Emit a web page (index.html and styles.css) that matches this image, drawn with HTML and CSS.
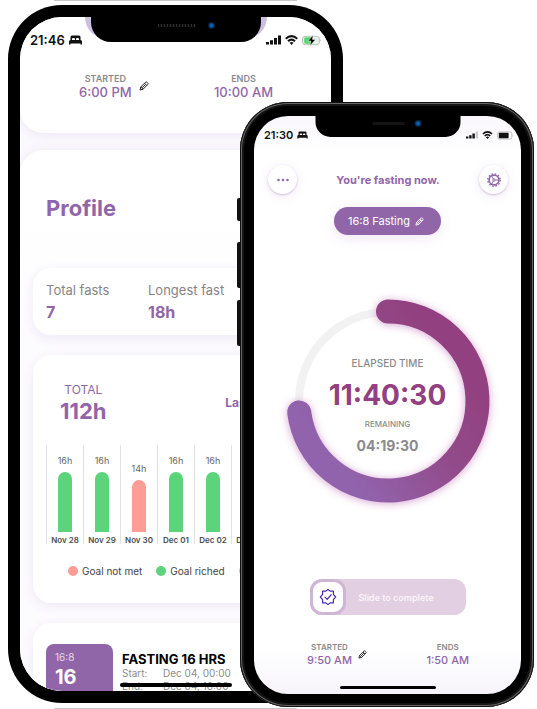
FILE: index.html
```html
<!DOCTYPE html>
<html lang="en">
<head>
<meta charset="utf-8">
<meta name="viewport" content="width=device-width, initial-scale=1">
<title>Fasting tracker</title>
<link rel="stylesheet" href="styles.css">
</head>
<body>
<svg class="defs" width="0" height="0" aria-hidden="true">
  <symbol id="bed" viewBox="0 0 26 20"><path d="M3 10V4q0-3 3-3h14q3 0 3 3v6h-3V8q0-2-2-2h-2q-2 0-2 2v2h-2V8q0-2-2-2H8Q6 6 6 8v2zM3 10h20q3 0 3 3v6h-3v-2H3v2H0v-6q0-3 3-3z"/></symbol>
  <symbol id="pencil" viewBox="0 0 20 20"><g fill="none" stroke="currentColor" stroke-width="2" stroke-linejoin="round"><path d="M2 18l1.500-6L13 2.500q1.500-1.500 3 0l1.500 1.500q1.500 1.500 0 3L8 16.500z"/><path d="M11 4.500l4.500 4.500M3.500 12L8 16.500M6.500 13.500l7-7"/></g></symbol>
  <symbol id="signal" viewBox="0 0 30 20"><path d="M0 14h6v5H0zM8 10.500h6V19H8zM16 6h6v13h-6z"/><path class="last-bar" d="M24 1h6v18h-6z"/></symbol>
  <symbol id="wifi" viewBox="0 0 26 20"><g fill="none" stroke="currentColor" stroke-width="4"><path d="M1.500 7.500q11.500-10.500 23 0"/><path d="M6 12.500q7-6.500 14 0"/></g><path d="M9 15.500q4-3 8 0L13 20z"/></symbol>
</svg>
<main class="stage">
  <section class="phone phone-back" aria-label="Profile">
    <div class="screen">
      <div class="notch"><span class="speaker"></span><span class="lens"></span></div>
      <header class="status">
        <span class="clock">21:46 <svg class="i-bed"><use href="#bed"/></svg></span>
        <span class="indicators">
          <svg class="i-signal"><use href="#signal"/></svg>
          <svg class="i-wifi"><use href="#wifi"/></svg>
          <svg class="i-battery" viewBox="0 0 38 20"><rect x="1" y="2" width="32" height="16" rx="5" fill="#e9f3eb" stroke="#a9b5aa" stroke-width="1.500"/><path d="M7 4h12v12H7q-3 0-3-3V7q0-3 3-3z" fill="#5bd573"/><path d="M35 7q3 3 0 6z" fill="#aaa"/><path d="M21 0L11 11h6l-2 9L26 8h-6z" fill="#000" stroke="#fff"/></svg>
        </span>
      </header>
      <div class="times">
        <div class="time"><small>STARTED</small><strong>6:00 PM</strong></div>
        <button class="edit" aria-label="Edit start time"><svg><use href="#pencil"/></svg></button>
        <div class="time time-end"><small>ENDS</small><strong>10:00 AM</strong></div>
      </div>
      <div class="panel">
        <h1>Profile</h1>
        <div class="card stats">
          <div class="stat"><span>Total fasts</span><b>7</b></div>
          <div class="stat"><span>Longest fast</span><b>18h</b></div>
        </div>
        <div class="card summary">
          <div class="summary-head">
            <div class="total"><span>TOTAL</span><b>112h</b></div>
            <button class="range">Last 7 days</button>
          </div>
          <div class="chart">
            <div class="day"><span>16h</span><i class="bar"></i><b>Nov 28</b></div>
            <div class="day"><span>16h</span><i class="bar"></i><b>Nov 29</b></div>
            <div class="day"><span>14h</span><i class="bar missed"></i><b>Nov 30</b></div>
            <div class="day"><span>16h</span><i class="bar"></i><b>Dec 01</b></div>
            <div class="day"><span>16h</span><i class="bar"></i><b>Dec 02</b></div>
            <div class="day"><span>16h</span><i class="bar"></i><b>Dec 03</b></div>
            <div class="day"><span>16h</span><i class="bar"></i><b>Dec 04</b></div>
          </div>
          <div class="legend">
            <span class="key key-missed">Goal not met</span>
            <span class="key">Goal riched</span>
            <span class="key key-open">Active</span>
          </div>
        </div>
        <div class="card entry">
          <div class="tile"><span>16:8</span><b>16</b></div>
          <div class="entry-text">
            <h2>FASTING 16 HRS</h2>
            <dl><dt>Start:</dt><dd>Dec 04, 00:00</dd><dt>End:</dt><dd>Dec 04, 16:00</dd></dl>
          </div>
        </div>
      </div>
      <div class="home"></div>
    </div>
  </section>

  <section class="phone phone-front" aria-label="Current fast">
    <div class="keys"><i></i><i></i><i></i></div>
    <div class="screen">
      <div class="notch"><span class="speaker"></span><span class="lens"></span></div>
      <header class="status">
        <span class="clock">21:30 <svg class="i-bed"><use href="#bed"/></svg></span>
        <span class="indicators">
          <svg class="i-signal weak"><use href="#signal"/></svg>
          <svg class="i-wifi"><use href="#wifi"/></svg>
          <svg class="i-battery" viewBox="0 0 38 20"><rect x="1" y="2" width="32" height="16" rx="4" fill="#fff" stroke="#aaa" stroke-width="1.500"/><rect x="4" y="4" width="22" height="12" rx="1.500"/><path d="M35 7q3 3 0 6z" fill="#aaa"/></svg>
        </span>
      </header>
      <div class="topbar">
        <button class="round" aria-label="More"><svg viewBox="0 0 14 14"><circle cx="2.500" cy="7" r="1.300"/><circle cx="7" cy="7" r="1.300"/><circle cx="11.500" cy="7" r="1.300"/></svg></button>
        <h2>You're fasting now.</h2>
        <button class="round" aria-label="Settings"><svg viewBox="0 0 14 14"><g fill="none" stroke="currentColor"><circle cx="7" cy="7" r="6.200" stroke-width="1.400" stroke-dasharray="1.620 1.620"/><circle cx="7" cy="7" r="4.900" stroke-width="1.600"/><path d="M8.300 7H12M6.400 5.900L4.600 2.800M6.400 8.100l-1.800 3.100"/><circle cx="7" cy="7" r="1.200"/></g></svg></button>
      </div>
      <button class="plan">16:8 Fasting <svg><use href="#pencil"/></svg></button>
      <div class="dial">
        <svg class="ring" viewBox="0 0 224 224" aria-hidden="true">
          <defs><linearGradient id="sweep" x1="0.850" y1="0.200" x2="0.150" y2="0.750"><stop offset="0" stop-color="#92407f"/><stop offset="0.450" stop-color="#924b8a"/><stop offset="1" stop-color="#9163ac"/></linearGradient></defs>
          <circle cx="112" cy="112" r="89" fill="none" stroke="#f2f2f2" stroke-width="8"/>
          <path class="arc" d="M112 22.500A89.500 89.500 0 1 1 23.200 123.400" fill="none" stroke="url(#sweep)" stroke-width="24" stroke-linecap="round"/>
        </svg>
        <div class="readout">
          <span class="label">ELAPSED TIME</span>
          <strong>11:40:30</strong>
          <span class="label small">REMAINING</span>
          <b>04:19:30</b>
        </div>
      </div>
      <div class="slide">
        <input id="complete" type="range" min="0" max="100" value="0">
        <svg viewBox="0 0 20 20" aria-hidden="true"><g fill="none" stroke="#4a2bb0" stroke-width="1.300" stroke-linejoin="round" stroke-linecap="round"><path d="M10 1.500l2.300 2H16v3.700l2.500 2.800-2.500 2.800v3.700h-3.700l-2.300 2-2.300-2H4v-3.700L1.500 10 4 7.200V3.500h3.700z"/><path d="M6.700 10.200l2.400 2.500 4.400-5.200"/></g></svg>
        <label for="complete">Slide to complete</label>
      </div>
      <div class="times">
        <div class="time"><small>STARTED</small><strong>9:50 AM</strong></div>
        <button class="edit" aria-label="Edit start time"><svg><use href="#pencil"/></svg></button>
        <div class="time time-end"><small>ENDS</small><strong>1:50 AM</strong></div>
      </div>
      <div class="home"></div>
    </div>
  </section>
</main>
</body>
</html>
```
FILE: styles.css
```css
* { box-sizing: border-box; }
body {
  margin: 0;
  background: #fff;
  font-family: Inter, "Liberation Sans", sans-serif;
  color: #111;
}
button { border: 0; padding: 0; background: none; font: inherit; color: inherit; cursor: pointer; }
svg { display: block; fill: currentColor; }
h1, h2, dl, dd { margin: 0; }
.defs { position: absolute; }

.stage {
  display: grid;
  grid-template-columns: 232fr 103fr 191fr;
  align-items: start;
  padding: 5px 3px 2px 8px;
  overflow: hidden;
}
.phone { position: relative; grid-row: 1; background: #000; }
.phone-back {
  grid-column: 1 / 3;
  aspect-ratio: 335 / 698;
  padding: 12px;
  border-radius: 54px;
}
.phone-back::before,
.phone-back::after {
  content: "";
  position: absolute;
  left: 46px;
  right: 46px;
  height: 1px;
  background: #c8c8c8;
}
.phone-back::before { top: -5px; }
.phone-back::after { bottom: -6px; }
.phone-front {
  grid-column: 2 / 4;
  aspect-ratio: 294 / 605;
  margin-top: 97px;
  padding: 14px 13px 13px 14px;
  border-radius: 48px;
  box-shadow: inset 0 0 0 1px #111, inset 0 0 0 2px #666, inset 0 0 0 4px #151515;
}
.screen {
  position: relative;
  display: flex;
  flex-direction: column;
  height: 100%;
  overflow: hidden;
  background: #fff;
}
.phone-back .screen { border-radius: 42px; background: #faf9fd; }
.phone-front .screen {
  border-radius: 34px;
  background: linear-gradient(#faf7fc, #fff 40px, #fff 530px, #f6f4fa);
}

.keys { position: absolute; top: 96px; left: -3px; display: grid; gap: 12px; }
.keys i { width: 4px; height: 46px; background: #111; border-radius: 2px 0 0 2px; }
.keys i:first-child { height: 23px; margin-bottom: 9px; }

.notch {
  position: absolute;
  z-index: 2;
  top: 0;
  left: 50%;
  display: flex;
  align-items: center;
  justify-content: center;
  transform: translateX(-50%);
  background: #000;
}
.phone-back .notch {
  width: 170px;
  height: 25px;
  padding-bottom: 8px;
  gap: 12px;
  border-radius: 0 0 20px 20px;
  background: none;
}
.phone-back .notch::before {
  content: "";
  position: absolute;
  z-index: -1;
  inset: 0 -6px 3px;
  border-radius: 0 0 22px 22px;
  background: #cdbfe0;
}
.phone-back .notch::after {
  content: "";
  position: absolute;
  z-index: -1;
  inset: 0;
  border-radius: inherit;
  background: #000;
}
.phone-front .notch { width: 145px; height: 21px; padding-bottom: 6px; gap: 10px; border-radius: 0 0 15px 15px; }
.speaker { width: 38px; height: 3px; margin-left: 22px; background: repeating-linear-gradient(90deg, #333 0 1px, #0a0a0a 1px 3px); }
.lens { width: 7px; height: 7px; border-radius: 50%; background: radial-gradient(circle, #0b65b8 0 1px, #06233f 3px, #0a0a0f); }
.phone-front .speaker { width: 32px; margin-left: 18px; background: #141414; }

.status { display: flex; align-items: center; justify-content: space-between; font-weight: 600; }
.clock, .indicators { display: flex; align-items: center; gap: 4px; }
.phone-back .status { position: relative; z-index: 1; flex: none; height: 46px; padding: 0 9px 0 10px; background: #fff; font-size: 13px; }
.phone-front .status { height: 38px; padding: 0 7px 0 10px; font-size: 11px; }
.i-bed { width: 13px; height: 10px; }
.i-signal { width: 15px; height: 10px; }
.i-wifi { width: 13px; height: 10px; }
.i-battery { width: 20px; height: 11px; }
.phone-front .i-bed { width: 11px; height: 8px; }
.phone-front .i-signal { width: 12px; height: 8px; }
.phone-front .i-wifi { width: 11px; height: 8px; }
.phone-front .i-battery { width: 17px; height: 9px; }
.weak { --tip: #ccc; }
.last-bar { fill: var(--tip, currentColor); }

.times { display: flex; align-items: center; }
.time { display: grid; justify-items: center; color: #9166a8; }
.time small { color: #8a8a8e; font-weight: 600; }
.time strong { font-weight: 500; }
.edit { color: #222; }
.phone-back .times {
  flex: none;
  height: 70px;
  padding: 0 58px 25px 59px;
  background: #fff;
  border-radius: 0 0 24px 24px;
  box-shadow: 0 3px 8px #eeeaf6;
}
.phone-back .time small { font-size: 9px; line-height: 13px; }
.phone-back .time strong { font-size: 13px; line-height: 15px; }
.phone-back .edit { margin-left: 7px; }
.edit svg { width: 10px; height: 10px; }
.time-end { margin-left: auto; }

.panel {
  flex: none;
  margin-top: 17px;
  padding: 42px 13px 0;
  border-radius: 24px 24px 0 0;
  background: linear-gradient(#fff 70px, #fcfbfe 180px);
  box-shadow: 0 -3px 8px #f3f0f8;
}
.panel h1 { padding-left: 13px; font-size: 22px; line-height: 32px; font-weight: 700; color: #9166a8; }
.card {
  margin-bottom: 20px;
  padding: 13px;
  border-radius: 18px;
  background: #fff;
  box-shadow: 0 3px 12px #eee9f5;
}
.stats { display: flex; height: 67px; margin-top: 44px; }
.stat { display: grid; flex: 0 0 102px; align-content: start; white-space: nowrap; }
.stat span { font-size: 13px; line-height: 18px; color: #858585; }
.stat b { font-size: 16px; line-height: 26px; font-weight: 700; color: #9166a8; }
.summary { height: 248px; }
.summary-head { display: flex; align-items: flex-start; justify-content: space-between; height: 77px; padding: 13px 14px 0; color: #9166a8; }
.total { display: grid; justify-items: center; }
.total span { font-size: 12px; line-height: 18px; }
.total b { font-size: 22px; line-height: 25px; font-weight: 700; }
.range { font-size: 12px; line-height: 44px; font-weight: 700; }
.chart { display: grid; grid-template-columns: repeat(7, 1fr); height: 99px; }
.day {
  display: flex;
  flex-direction: column;
  align-items: center;
  justify-content: flex-end;
  border-left: 1px solid #e2e2e2;
  white-space: nowrap;
}
.day span { font-size: 9px; line-height: 12px; margin-bottom: 5px; color: #666; }
.day b { padding-top: 4px; font-size: 8px; line-height: 8px; font-weight: 600; color: #4c4c4c; }
.bar { width: 14px; height: 60px; border-radius: 7px 7px 0 0; background: #5cd47c; }
.missed { height: 52px; background: #fe9d95; }
.legend { display: flex; gap: 14px; margin-top: 17px; padding-left: 22px; }
.key { display: flex; align-items: center; gap: 4px; font-size: 10px; line-height: 20px; color: #444; white-space: nowrap; }
.key::before { content: ""; width: 10px; height: 10px; border-radius: 50%; background: #5cd47c; }
.key-missed::before { background: #fe9d95; }
.key-open::before { background: #c4c4c8; }
.entry { display: flex; gap: 9px; height: 120px; padding-top: 21px; }
.tile { display: grid; align-content: start; width: 67px; padding: 5px 9px; border-radius: 8px; background: #9166a8; color: #fff; }
.tile span { font-size: 10px; line-height: 16px; color: #e6d9ed; }
.tile b { font-size: 20px; line-height: 24px; font-weight: 700; }
.entry-text { padding-top: 7px; }
.entry h2 { font-size: 13px; line-height: 16px; font-weight: 700; color: #000; }
dl { display: grid; grid-template-columns: 41px auto; font-size: 10px; line-height: 13px; color: #8c8c8c; white-space: nowrap; }

.home { position: absolute; left: 50%; transform: translateX(-50%); border-radius: 3px; background: #000; }
.phone-back .home { bottom: 4px; width: 112px; height: 4px; }
.phone-front .home { bottom: 5px; width: 96px; height: 3px; }

.topbar { display: flex; align-items: center; justify-content: space-between; margin-top: 11px; padding: 0 13px 0 14px; color: #9166a8; }
.topbar h2 { font-size: 11px; line-height: 16px; font-weight: 700; }
.round {
  display: grid;
  place-items: center;
  width: 29px;
  height: 29px;
  border-radius: 50%;
  background: #fff;
  box-shadow: 0 1px 2px #cfc3da, 0 2px 12px #efe8f5;
}
.round svg { width: 14px; height: 14px; }
.plan {
  display: flex;
  align-items: center;
  align-self: center;
  gap: 5px;
  height: 28px;
  margin-top: 13px;
  padding: 0 17px 0 14px;
  border-radius: 14px;
  background: #9166a8;
  box-shadow: 0 3px 14px #efe6f4;
  color: #fff;
  font-size: 11px;
}
.plan svg { width: 9px; height: 9px; }
.dial { display: grid; place-items: center; margin-top: 54px; }
.dial > * { grid-area: 1 / 1; }
.ring { width: 224px; height: 224px; overflow: visible; }
.arc { filter: drop-shadow(0 1px 4px #d6a5d2); }
.readout { display: grid; justify-items: center; padding-top: 11px; color: #8a8a8e; }
.readout .label { font-size: 10px; line-height: 20px; font-weight: 500; }
.readout .small { font-size: 8px; line-height: 14px; }
.readout strong { font-size: 28px; line-height: 44px; font-weight: 700; color: #92407f; }
.readout b { font-size: 14px; line-height: 30px; font-weight: 700; }

.slide {
  display: grid;
  grid-template-columns: 36px 1fr;
  align-items: center;
  align-self: center;
  width: 156px;
  height: 36px;
  margin-top: 66px;
  border-radius: 12px;
  background: #e2cfe1;
}
.slide input { grid-area: 1 / 1 / 2 / 3; appearance: none; width: 100%; height: 36px; margin: 0; background: none; }
.slide input::-webkit-slider-thumb {
  appearance: none;
  width: 36px;
  height: 36px;
  border: 3px solid #cfb5d6;
  border-radius: 12px;
  background: #fff;
}
.slide svg { position: relative; grid-area: 1 / 1; justify-self: center; width: 18px; height: 18px; pointer-events: none; }
.slide label { position: relative; grid-area: 1 / 2; padding-left: 13px; font-size: 9px; font-weight: 600; color: #faf4fa; pointer-events: none; }
.phone-front .times { margin-top: 27px; padding: 0 52px 0 53px; }
.phone-front .time small { font-size: 8px; line-height: 11px; }
.phone-front .time strong { font-size: 11px; line-height: 14px; }
.phone-front .edit { margin-left: 6px; }
.phone-front .edit svg { width: 9px; height: 9px; }
```
